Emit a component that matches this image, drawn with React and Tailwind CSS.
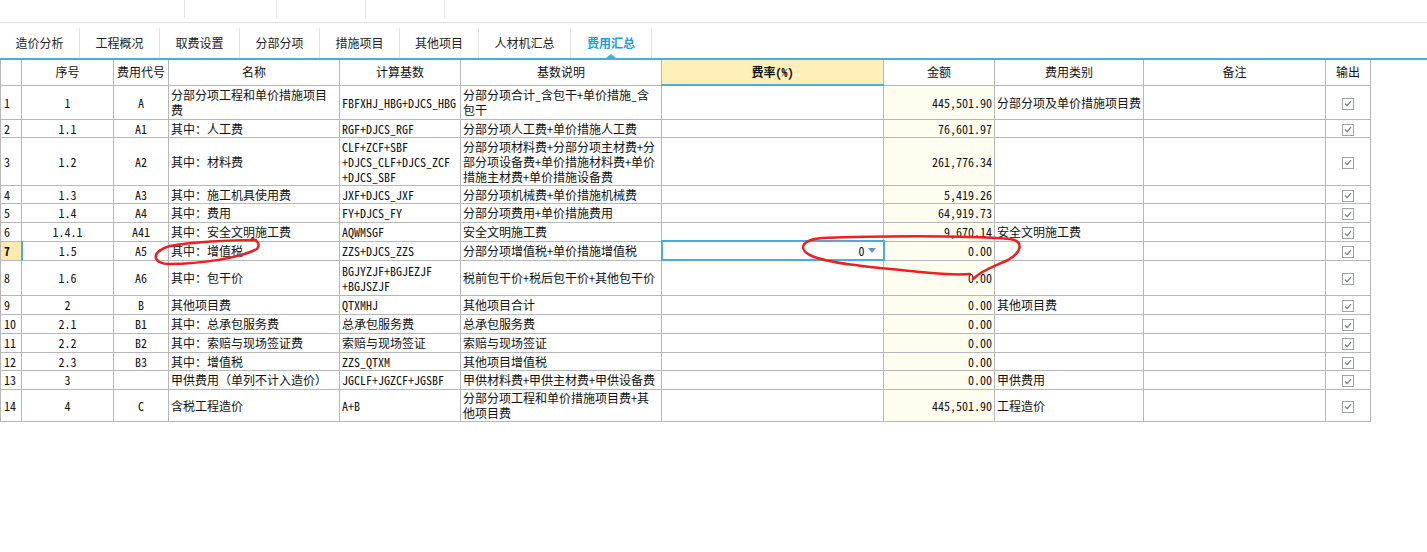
const tabs = [
  { label: "造价分析", w: "w-[80px]" },
  { label: "工程概况", w: "w-[80px]" },
  { label: "取费设置", w: "w-[80px]" },
  { label: "分部分项", w: "w-[80px]" },
  { label: "措施项目", w: "w-[80px]" },
  { label: "其他项目", w: "w-[79px]" },
  { label: "人材机汇总", w: "w-[92px]" },
  { label: "费用汇总", w: "w-[81px]", active: true },
];

const rows = [
  { n: "1", no: "1", code: "A", name: "分部分项工程和单价措施项目\n费", base: "FBFXHJ_HBG+DJCS_HBG", desc: "分部分项合计_含包干+单价措施_含\n包干", amt: "445,501.90", type: "分部分项及单价措施项目费", h: "h-[34px]" },
  { n: "2", no: "1.1", code: "A1", name: "其中：人工费", base: "RGF+DJCS_RGF", desc: "分部分项人工费+单价措施人工费", amt: "76,601.97", type: "", h: "h-[18px]" },
  { n: "3", no: "1.2", code: "A2", name: "其中：材料费", base: "CLF+ZCF+SBF\n+DJCS_CLF+DJCS_ZCF\n+DJCS_SBF", desc: "分部分项材料费+分部分项主材费+分\n部分项设备费+单价措施材料费+单价\n措施主材费+单价措施设备费", amt: "261,776.34", type: "", h: "h-[48px]" },
  { n: "4", no: "1.3", code: "A3", name: "其中：施工机具使用费", base: "JXF+DJCS_JXF", desc: "分部分项机械费+单价措施机械费", amt: "5,419.26", type: "", h: "h-[18px]" },
  { n: "5", no: "1.4", code: "A4", name: "其中：费用", base: "FY+DJCS_FY", desc: "分部分项费用+单价措施费用", amt: "64,919.73", type: "", h: "h-[19px]" },
  { n: "6", no: "1.4.1", code: "A41", name: "其中：安全文明施工费", base: "AQWMSGF", desc: "安全文明施工费", amt: "9,670.14", type: "安全文明施工费", h: "h-[19px]" },
  { n: "7", no: "1.5", code: "A5", name: "其中：增值税", base: "ZZS+DJCS_ZZS", desc: "分部分项增值税+单价措施增值税", amt: "0.00", type: "", h: "h-[19px]", sel: true },
  { n: "8", no: "1.6", code: "A6", name: "其中：包干价", base: "BGJYZJF+BGJEZJF\n+BGJSZJF", desc: "税前包干价+税后包干价+其他包干价", amt: "0.00", type: "", h: "h-[35px]" },
  { n: "9", no: "2", code: "B", name: "其他项目费", base: "QTXMHJ", desc: "其他项目合计", amt: "0.00", type: "其他项目费", h: "h-[19px]" },
  { n: "10", no: "2.1", code: "B1", name: "其中：总承包服务费", base: "总承包服务费", desc: "总承包服务费", amt: "0.00", type: "", h: "h-[19px]" },
  { n: "11", no: "2.2", code: "B2", name: "其中：索赔与现场签证费", base: "索赔与现场签证", desc: "索赔与现场签证", amt: "0.00", type: "", h: "h-[19px]" },
  { n: "12", no: "2.3", code: "B3", name: "其中：增值税", base: "ZZS_QTXM", desc: "其他项目增值税", amt: "0.00", type: "", h: "h-[18px]" },
  { n: "13", no: "3", code: "", name: "甲供费用（单列不计入造价）", base: "JGCLF+JGZCF+JGSBF", desc: "甲供材料费+甲供主材费+甲供设备费", amt: "0.00", type: "甲供费用", h: "h-[19px]" },
  { n: "14", no: "4", code: "C", name: "含税工程造价", base: "A+B", desc: "分部分项工程和单价措施项目费+其\n他项目费", amt: "445,501.90", type: "工程造价", h: "h-[32px]" },
];

function Check() {
  return (
    <span className="inline-flex w-[12px] h-[12px] border border-[#a3a3a3] bg-white items-center justify-center align-middle">
      <svg width="8" height="7" viewBox="0 0 8 7">
        <path d="M1 3.5 L3.2 5.6 L7 1.2" fill="none" stroke="#6d7c8e" strokeWidth="1.2" />
      </svg>
    </span>
  );
}

const td = "border border-[#b7b7b7] px-[2px] leading-[15px] align-middle whitespace-pre overflow-hidden";

export default function App() {
  return (
    <div className="relative w-[1427px] h-[552px] bg-white overflow-hidden text-[12px] text-[#111] font-['Noto_Sans_Mono_CJK_SC','Noto_Sans_CJK_SC',sans-serif]">
      <div className="flex h-[23px] border-b border-[#e0e0e0]">
        <div className="w-[185px] h-[18px] border-r border-[#e6e6e6]" />
        <div className="w-[92px] h-[18px] border-r border-[#e6e6e6]" />
        <div className="w-[89px] h-[18px] border-r border-[#e6e6e6]" />
        <div className="w-[79px] h-[18px] border-r border-[#e6e6e6]" />
      </div>
      <div className="flex pt-[5px] h-[35px]">
        {tabs.map((t) => (
          <div
            key={t.label}
            className={`relative ${t.w} h-[30px] flex items-center justify-center border-r border-[#e3e3e3] ${t.active ? "text-[#19a0e2] font-bold" : "text-[#222]"}`}
          >
            {t.label}
            {t.active && (
              <span className="absolute bottom-0 left-1/2 -translate-x-1/2 w-0 h-0 border-l-[5px] border-r-[5px] border-b-[4px] border-l-transparent border-r-transparent border-b-[#45aedb]" />
            )}
          </div>
        ))}
      </div>
      <div className="h-[2px] bg-[#45aedb]" />
      <table className="table-fixed border-collapse w-[1370px]">
        <colgroup>
          <col className="w-[21px]" />
          <col className="w-[92px]" />
          <col className="w-[55px]" />
          <col className="w-[171px]" />
          <col className="w-[121px]" />
          <col className="w-[201px]" />
          <col className="w-[222px]" />
          <col className="w-[111px]" />
          <col className="w-[149px]" />
          <col className="w-[182px]" />
          <col className="w-[45px]" />
        </colgroup>
        <thead>
          <tr className="h-[25px]">
            <th className="border border-t-0 border-[#b7b7b7] font-normal" />
            <th className="border border-t-0 border-[#b7b7b7] font-normal">序号</th>
            <th className="border border-t-0 border-[#b7b7b7] font-normal">费用代号</th>
            <th className="border border-t-0 border-[#b7b7b7] font-normal">名称</th>
            <th className="border border-t-0 border-[#b7b7b7] font-normal">计算基数</th>
            <th className="border border-t-0 border-[#b7b7b7] font-normal">基数说明</th>
            <th className="border border-t-0 border-[#b7b7b7] border-b-2 border-b-[#45aedb] bg-[#ffefb9] font-bold">费率(%)</th>
            <th className="border border-t-0 border-[#b7b7b7] font-normal">金额</th>
            <th className="border border-t-0 border-[#b7b7b7] font-normal">费用类别</th>
            <th className="border border-t-0 border-[#b7b7b7] font-normal">备注</th>
            <th className="border border-t-0 border-[#b7b7b7] font-normal">输出</th>
          </tr>
        </thead>
        <tbody>
          {rows.map((r) => (
            <tr key={r.n} className={r.h}>
              <td className={`${td} text-left pl-[3px] ${r.sel ? "bg-[#ffeaae] font-bold border-r-2 border-r-[#45aedb]" : ""}`}>{r.n}</td>
              <td className={`${td} text-center`}>{r.no}</td>
              <td className={`${td} text-center`}>{r.code}</td>
              <td className={`${td} text-left`}>{r.name}</td>
              <td className={`${td} text-left`}>{r.base}</td>
              <td className={`${td} text-left`}>{r.desc}</td>
              {r.sel ? (
                <td className="border-2 border-[#45aedb] px-[2px] leading-[15px] align-middle">
                  <div className="flex items-center justify-end gap-[3px] pr-[5px]">
                    <span>0</span>
                    <svg width="8" height="5" viewBox="0 0 8 5">
                      <path d="M0 0 L8 0 L4 5 Z" fill="#5f93c6" />
                    </svg>
                  </div>
                </td>
              ) : (
                <td className={td} />
              )}
              <td className={`${td} text-right bg-[#fffdf0]`}>{r.amt}</td>
              <td className={`${td} text-left`}>{r.type}</td>
              <td className={td} />
              <td className={`${td} text-center`}>
                <Check />
              </td>
            </tr>
          ))}
        </tbody>
      </table>
      <svg className="absolute inset-0 pointer-events-none" width="1427" height="552" viewBox="0 0 1427 552">
        <path
          d="M256 240 C230 240 190 242 170 246 C150 252 152 264 170 264 C200 264 240 258 257 249 C260 245 259 241 252 239"
          fill="none"
          stroke="#f01e1e"
          strokeWidth="2.5"
          strokeLinecap="round"
        />
        <path
          d="M973 279 C982 270 995 266 1008 260 C1022 252 1024 241 1010 239 C960 235 870 236 822 238 C800 240 798 250 812 256 C830 264 880 268 920 272 C940 274 958 275 970 274"
          fill="none"
          stroke="#f01e1e"
          strokeWidth="2.5"
          strokeLinecap="round"
        />
      </svg>
    </div>
  );
}
